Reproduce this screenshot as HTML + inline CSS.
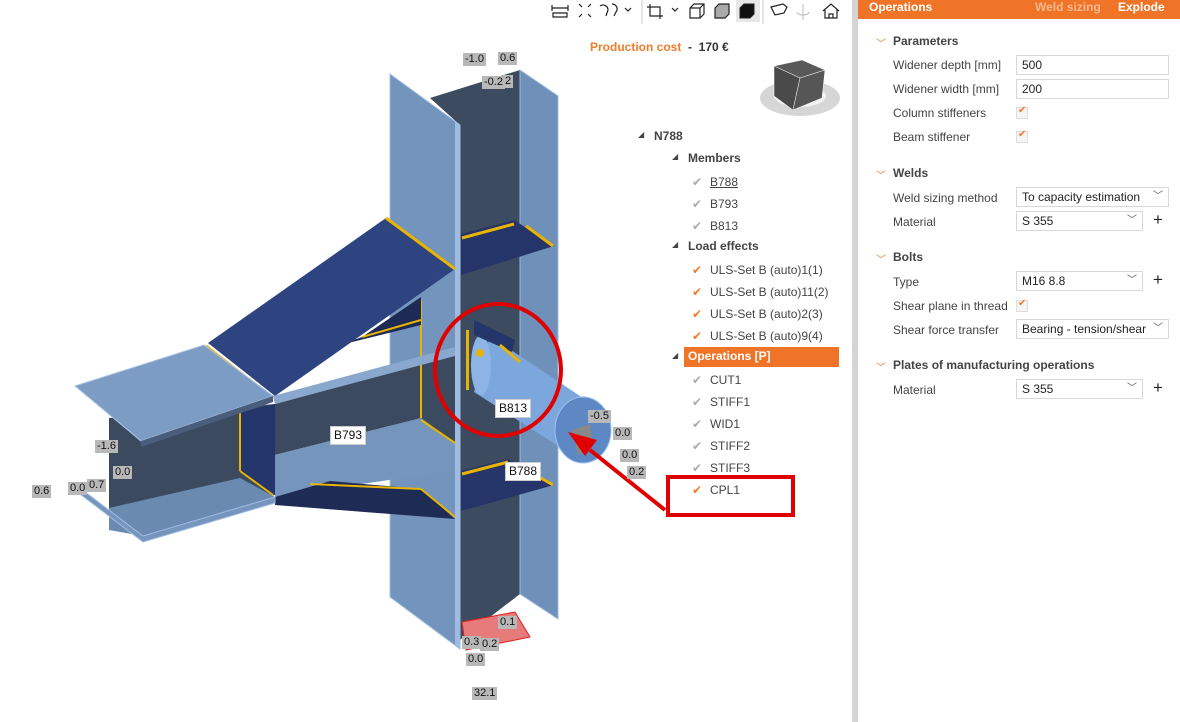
<!DOCTYPE html>
<html><head><meta charset="utf-8"><style>
*{margin:0;padding:0;box-sizing:border-box}
body{width:1180px;height:722px;overflow:hidden;background:#fff;font-family:"Liberation Sans",sans-serif;font-size:12px;color:#333;position:relative}
.a{position:absolute;white-space:nowrap}
.lbl{position:absolute;background:#b8b8b8;color:#111;font-size:11px;padding:0 2px;line-height:13px}
.wl{position:absolute;background:#fff;color:#111;font-size:12px;padding:1px 3px;line-height:15px;border:1px solid #ccc}
.inp{position:absolute;left:1016px;width:153px;height:20px;border:1px solid #d8d8d8;background:#fff;font-size:12px;color:#222;padding:2px 5px;line-height:14px}
.sel{width:127px}
.dd{position:absolute;right:5px;top:2px;color:#555;font-size:10px}
.plus{position:absolute;left:1153px;font-size:17px;color:#222;line-height:17px}
.rl{position:absolute;left:893px;font-size:12px;color:#444}
.hd{position:absolute;left:893px;font-size:12px;font-weight:bold;color:#444}
.cv{position:absolute;left:876px;color:#f07c2a;font-size:10px}
.cb{position:absolute;left:1016px;width:12px;height:12px;border:1px solid #ddd;background:#f4f4f4}
</style></head><body>

<svg class="a" style="left:0;top:0" width="850" height="722">
<!-- column web -->
<polygon points="430,98 520,70 520,594 460,640 460,125" fill="#3c4b5f"/>
<!-- column back flange -->
<polygon points="520,70 558,96 558,619 520,594" fill="#6f90b8" stroke="#9ab7dc"/>
<!-- column stiffeners -->
<polygon points="461,234 514,220 554,246 461,275" fill="#25356a"/>
<polygon points="461,471 508,459 554,485 461,511" fill="#25356a"/>
<line x1="462" y1="238" x2="514" y2="224" stroke="#e8b400" stroke-width="3"/>
<line x1="526" y1="226" x2="553" y2="246" stroke="#e8b400" stroke-width="3"/>
<line x1="462" y1="474" x2="508" y2="462" stroke="#e8b400" stroke-width="3"/>
<line x1="520" y1="466" x2="553" y2="485" stroke="#e8b400" stroke-width="3"/>
<!-- column front flange -->
<polygon points="390,74 460,125 460,649 390,597" fill="#7395bd" stroke="#a0bde0"/>
<polygon points="455,121 460,125 460,649 455,645" fill="#9fbbe0"/>
<!-- beam left web -->
<polygon points="109,418 275,404 275,495 109,530" fill="#3b4a5f"/>
<polygon points="109,508 240,478 275,497 143,536 109,530" fill="#6b8ab0"/>
<!-- beam right web -->
<polygon points="275,404 455,354 455,443 421,418 275,455" fill="#3b4a5f"/>
<!-- bottom flange top surface right -->
<polygon points="275,455 421,418 455,443 455,470 275,497" fill="#7595bd"/>
<!-- lower haunch -->
<polygon points="275,497 330,481 421,489 455,519 275,505" fill="#1e2b55"/>
<line x1="310" y1="484" x2="421" y2="489" stroke="#e8b400" stroke-width="2"/>
<line x1="421" y1="489" x2="455" y2="517" stroke="#e8b400" stroke-width="2"/>
<line x1="421" y1="420" x2="455" y2="443" stroke="#e8b400" stroke-width="2"/>
<!-- stiffener plate in beam -->
<polygon points="240,412 275,404 275,495 240,471" fill="#24356b"/>
<line x1="240" y1="412" x2="240" y2="471" stroke="#e8b400" stroke-width="2"/>
<line x1="240" y1="471" x2="273" y2="495" stroke="#e8b400" stroke-width="2"/>
<line x1="421" y1="300" x2="421" y2="418" stroke="#e8b400" stroke-width="2"/>
<!-- bottom flange -->
<polygon points="76,485 143,536 275,497 275,503 143,542 76,491" fill="#7595bd" stroke="#a0bde0"/>
<!-- upper haunch inner -->
<polygon points="362,337 421,297 421,325 340,345" fill="#1c2a55"/>
<line x1="362" y1="337" x2="421" y2="320" stroke="#e8b400" stroke-width="2"/>
<!-- upper haunch -->
<polygon points="208,343 386,218 455,269 275,396" fill="#2e4480"/>
<line x1="386" y1="218" x2="455" y2="269" stroke="#e8b400" stroke-width="3"/>
<line x1="206" y1="346" x2="270" y2="396" stroke="#e8b400" stroke-width="3"/>
<!-- top flange -->
<polygon points="75,386 204,345 273,396 141,441" fill="#7d9cc4" stroke="#a8c3e4"/>
<polygon points="141,441 273,396 273,402 141,447" fill="#4a5d7c"/>
<polygon points="273,396 455,347 455,356 275,404" fill="#8aa8cd"/>
<!-- cylinder B813 -->
<polygon points="490,336 583,398 583,462 474,392" fill="#7ca7dc"/>
<ellipse cx="481" cy="365" rx="10" ry="30" fill="#8db4e6"/>
<ellipse cx="583" cy="430" rx="28" ry="33" fill="#5d88c4" stroke="#9bc1ee"/>
<polygon points="572,430 590,424 593,446 578,455" fill="#888"/>
<rect x="466" y="330" width="3" height="60" fill="#e8b400"/>
<polygon points="474,320 515,340 512,352 474,335" fill="#24356b"/>
<line x1="500" y1="345" x2="520" y2="362" stroke="#e8b400" stroke-width="3"/>
<circle cx="480" cy="353" r="4" fill="#e8b400"/>
<!-- red base plate -->
<polygon points="462,622 515,612 530,637 466,650" fill="#e77a7a" stroke="#e02020"/>
<!-- red circle -->
<ellipse cx="498" cy="370" rx="63" ry="66" fill="none" stroke="#e00000" stroke-width="4"/>
<!-- arrow -->
<line x1="665" y1="510" x2="590" y2="450" stroke="#e00000" stroke-width="4"/>
<polygon points="568,432 597,440 585,456" fill="#e00000"/>
<rect x="668" y="477" width="125" height="38" fill="none" stroke="#e00000" stroke-width="4"/>
<!-- navcube -->
<ellipse cx="800" cy="98" rx="40" ry="18" fill="#d6d6d6"/>
<ellipse cx="800" cy="96" rx="26" ry="11" fill="#f2f2f2"/>
<polygon points="774,66 802,60 825,70 800,78" fill="#595959" stroke="#fff" stroke-width=".5"/>
<polygon points="774,66 800,78 793,110 774,96" fill="#4a4a4a" stroke="#fff" stroke-width=".5"/>
<polygon points="800,78 825,70 822,98 793,110" fill="#565656" stroke="#fff" stroke-width=".5"/>
<!-- toolbar icons -->
<g stroke="#222" fill="none" stroke-width="1.2">
<path d="M552 8h16M552 5v6M568 5v6M553 13h14v4h-14z"/>
<path d="M579 4l3 3M591 4l-3 3M579 17l3-3M591 17l-3-3"/>
<path d="M600 6a5 5 0 0 1 8 4l-2 6M612 4a5 5 0 0 1 5 6l-3 6"/>
<path d="M625 8l3 3 3-3"/>
<path d="M650 4v12h13M647 7h13v12"/>
<path d="M672 8l3 3 3-3"/>
<path d="M690 8l4-4h10v10l-4 4h-10z M690 8h10v10M700 8l4-4"/>
<path d="M715 8l4-4h10v10l-4 4h-10z" fill="#aaa"/>
<path d="M771 7l12-3 4 3-3 6-9 2z"/>
<path d="M823 11l8-7 8 7M825 10v8h12v-8M829 18v-4h4v4"/>
</g>
<rect x="736" y="0" width="24" height="22" fill="#e8e8e8"/>
<path d="M740 8l4-4h10v10l-4 4h-10z" fill="#111" stroke="#222"/>
<line x1="642" y1="0" x2="642" y2="24" stroke="#ccc"/>
<line x1="763" y1="0" x2="763" y2="24" stroke="#ccc"/>
<path d="M803 4v16M797 12a6 3 0 0 0 12 0" stroke="#bbb" fill="none"/>
</svg>

<div class="wl" style="left:330px;top:426px">B793</div>
<div class="wl" style="left:495px;top:399px">B813</div>
<div class="wl" style="left:505px;top:462px">B788</div>
<div class="lbl" style="left:95px;top:440px">-1.6</div>
<div class="lbl" style="left:113px;top:466px">0.0</div>
<div class="lbl" style="left:32px;top:485px">0.6</div>
<div class="lbl" style="left:68px;top:482px">0.0</div>
<div class="lbl" style="left:87px;top:479px">0.7</div>
<div class="lbl" style="left:463px;top:53px">-1.0</div>
<div class="lbl" style="left:498px;top:52px">0.6</div>
<div class="lbl" style="left:482px;top:76px">-0.2</div>
<div class="lbl" style="left:503px;top:75px">2</div>
<div class="lbl" style="left:588px;top:410px">-0.5</div>
<div class="lbl" style="left:613px;top:427px">0.0</div>
<div class="lbl" style="left:620px;top:449px">0.0</div>
<div class="lbl" style="left:627px;top:466px">0.2</div>
<div class="lbl" style="left:498px;top:616px">0.1</div>
<div class="lbl" style="left:462px;top:636px">0.3</div>
<div class="lbl" style="left:480px;top:638px">0.2</div>
<div class="lbl" style="left:466px;top:653px">0.0</div>
<div class="lbl" style="left:472px;top:687px">32.1</div>

<div class="a" style="left:590px;top:40px;font-size:12px;font-weight:bold"><span style="color:#f07c2a">Production cost</span>&nbsp; - &nbsp;170 €</div>

<!-- tree -->
<div class="a" style="left:638px;top:130px;font-size:8px;color:#444">◢</div>
<div class="a" style="left:654px;top:129px;font-weight:bold;color:#444">N788</div>
<div class="a" style="left:672px;top:152px;font-size:8px;color:#444">◢</div>
<div class="a" style="left:688px;top:151px;font-weight:bold;color:#444">Members</div>
<div class="a" style="left:692px;top:175px;color:#aaa">✔</div><div class="a" style="left:710px;top:175px;color:#444;text-decoration:underline">B788</div>
<div class="a" style="left:692px;top:197px;color:#aaa">✔</div><div class="a" style="left:710px;top:197px;color:#444">B793</div>
<div class="a" style="left:692px;top:219px;color:#aaa">✔</div><div class="a" style="left:710px;top:219px;color:#444">B813</div>
<div class="a" style="left:672px;top:240px;font-size:8px;color:#444">◢</div>
<div class="a" style="left:688px;top:239px;font-weight:bold;color:#444">Load effects</div>
<div class="a" style="left:692px;top:263px;color:#f07c2a">✔</div><div class="a" style="left:710px;top:263px;color:#444">ULS-Set B (auto)1(1)</div>
<div class="a" style="left:692px;top:285px;color:#f07c2a">✔</div><div class="a" style="left:710px;top:285px;color:#444">ULS-Set B (auto)11(2)</div>
<div class="a" style="left:692px;top:307px;color:#f07c2a">✔</div><div class="a" style="left:710px;top:307px;color:#444">ULS-Set B (auto)2(3)</div>
<div class="a" style="left:692px;top:329px;color:#f07c2a">✔</div><div class="a" style="left:710px;top:329px;color:#444">ULS-Set B (auto)9(4)</div>
<div class="a" style="left:672px;top:351px;font-size:8px;color:#444">◢</div>
<div class="a" style="left:684px;top:347px;width:155px;height:20px;background:#f07427;color:#fff;font-weight:bold;padding:2px 4px">Operations [P]</div>
<div class="a" style="left:692px;top:373px;color:#aaa">✔</div><div class="a" style="left:710px;top:373px;color:#444">CUT1</div>
<div class="a" style="left:692px;top:395px;color:#aaa">✔</div><div class="a" style="left:710px;top:395px;color:#444">STIFF1</div>
<div class="a" style="left:692px;top:417px;color:#aaa">✔</div><div class="a" style="left:710px;top:417px;color:#444">WID1</div>
<div class="a" style="left:692px;top:439px;color:#aaa">✔</div><div class="a" style="left:710px;top:439px;color:#444">STIFF2</div>
<div class="a" style="left:692px;top:461px;color:#aaa">✔</div><div class="a" style="left:710px;top:461px;color:#444">STIFF3</div>
<div class="a" style="left:692px;top:483px;color:#f07c2a">✔</div><div class="a" style="left:710px;top:483px;color:#444">CPL1</div>

<div class="a" style="left:852px;top:0;width:6px;height:722px;background:#d4d4d4"></div>

<div class="a" style="left:858px;top:0;width:322px;height:19px;background:#f07427"></div>
<div class="a" style="left:869px;top:0;color:#fff;font-weight:bold;line-height:15px">Operations</div>
<div class="a" style="left:1035px;top:0;color:#f8b890;font-weight:bold;line-height:15px">Weld sizing</div>
<div class="a" style="left:1118px;top:0;color:#fff;font-weight:bold;line-height:15px">Explode</div>

<div class="cv" style="top:35px">﹀</div><div class="hd" style="top:34px">Parameters</div>
<div class="rl" style="top:58px">Widener depth [mm]</div><div class="inp" style="top:55px">500</div>
<div class="rl" style="top:82px">Widener width [mm]</div><div class="inp" style="top:79px">200</div>
<div class="rl" style="top:106px">Column stiffeners</div><div class="cb" style="top:107px"></div><div class="a" style="left:1018px;top:105px;color:#f07c2a;font-size:10px">✔</div>
<div class="rl" style="top:130px">Beam stiffener</div><div class="cb" style="top:131px"></div><div class="a" style="left:1018px;top:129px;color:#f07c2a;font-size:10px">✔</div>

<div class="cv" style="top:167px">﹀</div><div class="hd" style="top:166px">Welds</div>
<div class="rl" style="top:191px">Weld sizing method</div><div class="inp" style="top:187px">To capacity estimation<span class="dd">﹀</span></div>
<div class="rl" style="top:215px">Material</div><div class="inp sel" style="top:211px">S 355<span class="dd">﹀</span></div><div class="plus" style="top:211px">+</div>

<div class="cv" style="top:251px">﹀</div><div class="hd" style="top:250px">Bolts</div>
<div class="rl" style="top:275px">Type</div><div class="inp sel" style="top:271px">M16 8.8<span class="dd">﹀</span></div><div class="plus" style="top:271px">+</div>
<div class="rl" style="top:299px">Shear plane in thread</div><div class="cb" style="top:300px"></div><div class="a" style="left:1018px;top:298px;color:#f07c2a;font-size:10px">✔</div>
<div class="rl" style="top:323px">Shear force transfer</div><div class="inp" style="top:319px;overflow:hidden">Bearing - tension/shear<span class="dd" style="background:#fff">﹀</span></div>

<div class="cv" style="top:359px">﹀</div><div class="hd" style="top:358px">Plates of manufacturing operations</div>
<div class="rl" style="top:383px">Material</div><div class="inp sel" style="top:379px">S 355<span class="dd">﹀</span></div><div class="plus" style="top:379px">+</div>
</body></html>
